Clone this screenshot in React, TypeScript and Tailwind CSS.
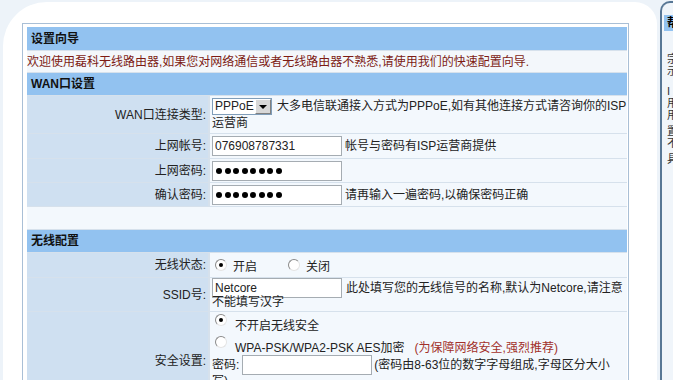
import React from 'react'

const Radio = ({ checked = false }: { checked?: boolean }) => (
  <span className="inline-flex h-[12px] w-[12px] shrink-0 items-center justify-center rounded-full border border-t-[#8a8a8a] border-l-[#8a8a8a] border-r-[#e4e4e4] border-b-[#e4e4e4] bg-white align-middle">
    {checked && <span className="h-[4px] w-[4px] rounded-full bg-black" />}
  </span>
)

const TextBox = ({ value }: { value: string }) => (
  <input
    readOnly
    type="text"
    value={value}
    className="h-[20px] w-[130px] shrink-0 border border-[#a5acb2] bg-white px-[2px] align-middle text-[12px] text-[#222] outline-none"
  />
)

// password field: the dots in the reference are large and bold
const PasswordBox = () => (
  <div className="flex h-[20px] w-[130px] shrink-0 items-center gap-[2.5px] border border-[#a5acb2] bg-white pl-[3px]">
    {[0, 1, 2, 3, 4, 5, 6, 7].map((i) => (
      <span key={i} className="h-[6px] w-[6px] rounded-full bg-black" />
    ))}
  </div>
)

const SectionHeader = ({ title, h = 'h-[22px]' }: { title: string; h?: string }) => (
  <div className={`flex ${h} items-center bg-[#92c2f0] pl-[4px] text-[12px] font-bold text-[#111]`}>{title}</div>
)

const Row = ({ label, children, className = '' }: { label: string; children: React.ReactNode; className?: string }) => (
  <div className={`grid grid-cols-[181px_1fr] gap-x-[2px] ${className}`}>
    <div className="flex items-center justify-end bg-[#cfe0f1] pr-[2px] text-[#222]">{label}:</div>
    <div className="bg-[#f3f8fd] pl-[2px] text-[#222]">{children}</div>
  </div>
)

export default function App() {
  return (
    <div
      className="flex h-[380px] w-[673px] overflow-hidden bg-[#edf3f9] text-[12px] leading-[16px]"
      style={{ fontFamily: '"Liberation Sans", "Noto Sans CJK SC", sans-serif' }}
    >
      <div className="mt-[2px] ml-[3px] w-[654px] shrink-0 rounded-tl-[44px] rounded-tr-[22px] bg-white pt-[21px] pl-[19px]">
        <div className="w-[607px] border border-[#a9bfd6] pt-[3px] pl-[4px] pr-[1px]">
          <div className="flex w-[600px] flex-col gap-y-px bg-[#d6e1ec]">
            <SectionHeader title="设置向导" h="h-[23px]" />
            <div className="flex h-[21px] items-center bg-[#f3f7fb] text-[#7d1b14]">
              欢迎使用磊科无线路由器,如果您对网络通信或者无线路由器不熟悉,请使用我们的快速配置向导.
            </div>
            <SectionHeader title="WAN口设置" />
            <Row label="WAN口连接类型" className="h-[37px]">
              <div className="pt-[2px] leading-[17px]">
                <span className="mr-[5px] inline-flex h-[17px] w-[60px] items-center border border-[#7f9db9] bg-white align-middle">
                  <span className="flex-1 pl-[2px] text-[12px]">PPPoE</span>
                  <span className="flex h-[15px] w-[16px] items-center justify-center border border-t-white border-l-white border-r-[#808080] border-b-[#808080] bg-[#d8d8d8]">
                    <span className="h-0 w-0 border-x-[4px] border-t-[4px] border-x-transparent border-t-black" />
                  </span>
                </span>
                <span className="align-middle">大多电信联通接入方式为PPPoE,如有其他连接方式请咨询你的ISP</span>
                <br />
                运营商
              </div>
            </Row>
            <Row label="上网帐号" className="h-[24px]">
              <div className="flex h-full items-center gap-[3px]">
                <TextBox value="076908787331" />
                <span>帐号与密码有ISP运营商提供</span>
              </div>
            </Row>
            <Row label="上网密码" className="h-[23px]">
              <div className="flex h-full items-center">
                <PasswordBox />
              </div>
            </Row>
            <Row label="确认密码" className="h-[23px]">
              <div className="flex h-full items-center gap-[3px]">
                <PasswordBox />
                <span>请再输入一遍密码,以确保密码正确</span>
              </div>
            </Row>
            <div className="h-[22px] bg-[#f3f8fd]" />
            <SectionHeader title="无线配置" />
            <Row label="无线状态" className="h-[24px]">
              <div className="flex h-full items-center pl-[3px]">
                <Radio checked />
                <span className="ml-[6px] mt-[4px]">开启</span>
                <span className="ml-[31px] flex">
                  <Radio />
                </span>
                <span className="ml-[6px] mt-[4px]">关闭</span>
              </div>
            </Row>
            <Row label="SSID号" className="h-[33px]">
              <div>
                <div className="flex items-center gap-[4px]">
                  <TextBox value="Netcore" />
                  <span>此处填写您的无线信号的名称,默认为Netcore,请注意</span>
                </div>
                <div className="-mt-[4px]">不能填写汉字</div>
              </div>
            </Row>
            <Row label="安全设置" className="h-[98px]">
              <div className="pt-[2px]">
                <div className="flex h-[22px] items-start pl-[3px]">
                  <Radio checked />
                  <span className="ml-[8px] mt-[4px]">不开启无线安全</span>
                </div>
                <div className="flex h-[19px] items-start pl-[3px]">
                  <Radio />
                  <span className="ml-[8px] mt-[4px]">WPA-PSK/WPA2-PSK AES加密</span>
                  <span className="ml-[10px] mt-[4px] text-[#a2302a]">(为保障网络安全,强烈推荐)</span>
                </div>
                <div className="flex items-center">
                  <span>密码:</span>
                  <span className="ml-[3px] flex">
                    <TextBox value="" />
                  </span>
                  <span className="ml-[2px]">(密码由8-63位的数字字母组成,字母区分大小</span>
                </div>
                <div className="-mt-[2px]">写)</div>
              </div>
            </Row>
          </div>
        </div>
      </div>
      <div className="mt-[1px] ml-[3px] min-w-0 flex-1 overflow-hidden rounded-tl-[10px] border-t-2 border-l-2 border-[#587795] bg-[#f0f5fa] pt-[12px] pl-[2px]">
        <div className="flex h-[16px] items-center bg-[#92c2f0] pl-[3px] font-bold whitespace-nowrap">帮助信息</div>
        <div className="mt-[22px] pl-[3px] text-[11px] leading-[12px] whitespace-nowrap text-[#333]">
          <div>宗旨</div>
          <div>示例</div>
          <div className="mt-[8px]">I</div>
          <div>用户</div>
          <div>用于</div>
          <div className="mt-[4px]">置</div>
          <div>不</div>
          <div className="mt-[4px]">具</div>
        </div>
      </div>
    </div>
  )
}
